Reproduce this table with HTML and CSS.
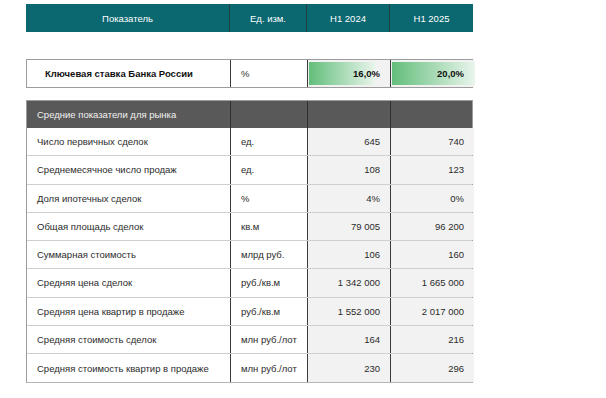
FILE: index.html
```html
<!DOCTYPE html>
<html lang="ru">
<head>
<meta charset="utf-8">
<link rel="stylesheet" href="styles.css">
</head>
<body>
<div class="page">
  <div class="grid head">
    <div class="c">Показатель</div>
    <div class="c">Ед. изм.</div>
    <div class="c">H1 2024</div>
    <div class="c">H1 2025</div>
  </div>

  <div class="grid key">
    <div class="c label">Ключевая ставка Банка России</div>
    <div class="c unit">%</div>
    <div class="c bar"><span class="fill" style="width:80%"></span><span class="val">16,0%</span></div>
    <div class="c bar"><span class="fill" style="width:100%"></span><span class="val">20,0%</span></div>
  </div>

  <div class="table">
    <div class="grid section">
      <div class="c">Средние показатели для рынка</div>
      <div class="c"></div>
      <div class="c"></div>
      <div class="c"></div>
    </div>
    <div class="grid row"><div class="c">Число первичных сделок</div><div class="c">ед.</div><div class="c num">645</div><div class="c num">740</div></div>
    <div class="grid row"><div class="c">Среднемесячное число продаж</div><div class="c">ед.</div><div class="c num">108</div><div class="c num">123</div></div>
    <div class="grid row"><div class="c">Доля ипотечных сделок</div><div class="c">%</div><div class="c num">4%</div><div class="c num">0%</div></div>
    <div class="grid row"><div class="c">Общая площадь сделок</div><div class="c">кв.м</div><div class="c num">79 005</div><div class="c num">96 200</div></div>
    <div class="grid row"><div class="c">Суммарная стоимость</div><div class="c">млрд руб.</div><div class="c num">106</div><div class="c num">160</div></div>
    <div class="grid row"><div class="c">Средняя цена сделок</div><div class="c">руб./кв.м</div><div class="c num">1 342 000</div><div class="c num">1 665 000</div></div>
    <div class="grid row"><div class="c">Средняя цена квартир в продаже</div><div class="c">руб./кв.м</div><div class="c num">1 552 000</div><div class="c num">2 017 000</div></div>
    <div class="grid row"><div class="c">Средняя стоимость сделок</div><div class="c">млн руб./лот</div><div class="c num">164</div><div class="c num">216</div></div>
    <div class="grid row last"><div class="c">Средняя стоимость квартир в продаже</div><div class="c">млн руб./лот</div><div class="c num">230</div><div class="c num">296</div></div>
  </div>
</div>
</body>
</html>
```

FILE: styles.css
```css
* { box-sizing: border-box; }
html, body { margin: 0; padding: 0; background: #fff; }
body {
  font-family: "Liberation Sans", Arial, sans-serif;
  font-size: 9.5px;
  color: #2b2b2b;
}
.page {
  padding: 4px 0 0 26px;
  width: 473px;
}
.grid {
  display: grid;
  grid-template-columns: 203px 77px 83px 84px;
}
.c {
  display: flex;
  align-items: center;
  min-width: 0;
  white-space: nowrap;
}

/* Header */
.head {
  height: 28px;
  background: #0b6770;
  color: #fff;
}
.head .c {
  justify-content: center;
  border-left: 1px solid #1c3f42;
}
.head .c:first-child { border-left: none; }

/* Key rate row */
.key {
  margin-top: 27px;
  height: 29px;
  border: 1.5px solid #9c9c9c;
  background: #fff;
  font-weight: bold;
  color: #111;
}
.key .c { border-left: 1px solid #3a3a3a; }
.key .c:first-child { border-left: none; }
.key .label { padding-left: 18px; }
.key .unit { padding-left: 10px; font-weight: normal; color: #333; }
.key .bar {
  position: relative;
  justify-content: flex-end;
  padding: 2px 10px 2px 1px;
  background: #f2f2f2;
}
.key .bar .fill {
  position: absolute;
  left: 1px;
  top: 2px;
  bottom: 2px;
  background: linear-gradient(to right, #63be7b, #e9f5ec);
}
.key .bar .val { position: relative; }

/* Main table */
.table {
  margin-top: 12px;
  border-left: 1.5px solid #9c9c9c;
  border-right: 1.5px solid #9c9c9c;
  border-bottom: 1.5px solid #b5b5b5;
}
.section {
  height: 28px;
  background: #595959;
  color: #f2f2f2;
  border-top: 1.5px solid #9c9c9c;
}
.section .c { border-left: 1px solid #2e2e2e; }
.section .c:first-child { border-left: none; padding-left: 10px; }

.row {
  height: 28.25px;
  border-bottom: 1px solid #cfcfcf;
}
.row.last { border-bottom: none; }
.row .c { border-left: 1px solid #3a3a3a; padding-left: 10px; }
.row .c:first-child { border-left: none; }
.row .num {
  justify-content: flex-end;
  padding-right: 10px;
  padding-left: 0;
  background: #f2f2f2;
}
```
